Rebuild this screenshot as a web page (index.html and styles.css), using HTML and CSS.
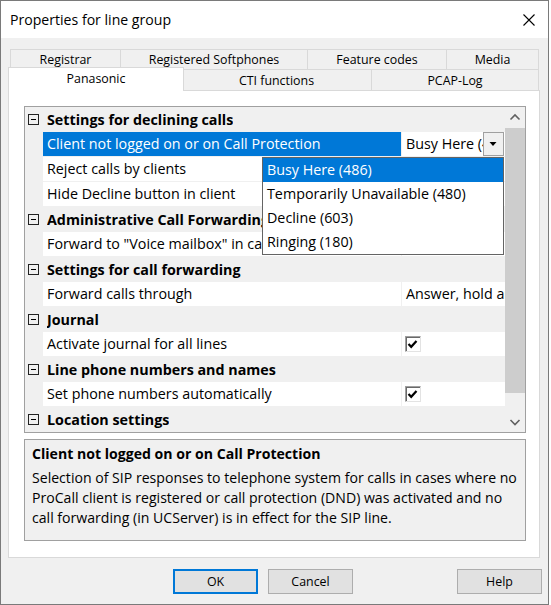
FILE: index.html
```html
<!DOCTYPE html>
<html>
<head>
<meta charset="utf-8">
<link rel="stylesheet" href="styles.css">
</head>
<body>
<div class="window">
  <div class="titlebar">
    <span class="title">Properties for line group</span>
    <svg class="close" width="12" height="12" viewBox="0 0 12 12"><path d="M0.5 0.5 L11.5 11.5 M11.5 0.5 L0.5 11.5" stroke="#000" stroke-width="1.1" fill="none"/></svg>
  </div>
  <div class="body">
    <div class="tabstrip">
      <div class="tabrow back">
        <div class="tab t-registrar">Registrar</div>
        <div class="tab t-softphones">Registered Softphones</div>
        <div class="tab t-codes">Feature codes</div>
        <div class="tab t-media">Media</div>
      </div>
      <div class="tabrow front">
        <div class="tab selected t-panasonic">Panasonic</div>
        <div class="tab t-cti">CTI functions</div>
        <div class="tab t-pcap">PCAP-Log</div>
      </div>
    </div>
    <div class="panel">
      <div class="grid">
        <div class="rows">
          <div class="row cat"><svg class="exp" width="11" height="11" viewBox="0 0 11 11"><rect x="0.5" y="0.5" width="10" height="10" fill="none" stroke="#222"/><path d="M3 5.5 H8" stroke="#000"/></svg><span class="cat-label">Settings for declining calls</span></div>
          <div class="row item sel"><span class="name">Client not logged on or on Call Protection</span><span class="value"><span class="vtext">Busy Here (486)</span><span class="ddbtn"><svg width="19" height="22" viewBox="0 0 19 22"><polygon points="5.5,9 12.5,9 9,13" fill="#000"/></svg></span></span></div>
          <div class="row item"><span class="name">Reject calls by clients</span><span class="value"></span></div>
          <div class="row item"><span class="name">Hide Decline button in client</span><span class="value"></span></div>
          <div class="row cat"><svg class="exp" width="11" height="11" viewBox="0 0 11 11"><rect x="0.5" y="0.5" width="10" height="10" fill="none" stroke="#222"/><path d="M3 5.5 H8" stroke="#000"/></svg><span class="cat-label">Administrative Call Forwarding</span></div>
          <div class="row item"><span class="name">Forward to "Voice mailbox" in case of no answer</span><span class="value"></span></div>
          <div class="row cat"><svg class="exp" width="11" height="11" viewBox="0 0 11 11"><rect x="0.5" y="0.5" width="10" height="10" fill="none" stroke="#222"/><path d="M3 5.5 H8" stroke="#000"/></svg><span class="cat-label">Settings for call forwarding</span></div>
          <div class="row item"><span class="name">Forward calls through</span><span class="value"><span class="vtext">Answer, hold and forward</span></span></div>
          <div class="row cat"><svg class="exp" width="11" height="11" viewBox="0 0 11 11"><rect x="0.5" y="0.5" width="10" height="10" fill="none" stroke="#222"/><path d="M3 5.5 H8" stroke="#000"/></svg><span class="cat-label">Journal</span></div>
          <div class="row item"><span class="name">Activate journal for all lines</span><span class="value"><span class="check"><svg width="14" height="14" viewBox="0 0 14 14"><path d="M2.5 7 L5.2 9.8 L10.5 4" stroke="#000" stroke-width="2.2" fill="none"/></svg></span></span></div>
          <div class="row cat"><svg class="exp" width="11" height="11" viewBox="0 0 11 11"><rect x="0.5" y="0.5" width="10" height="10" fill="none" stroke="#222"/><path d="M3 5.5 H8" stroke="#000"/></svg><span class="cat-label">Line phone numbers and names</span></div>
          <div class="row item"><span class="name">Set phone numbers automatically</span><span class="value"><span class="check"><svg width="14" height="14" viewBox="0 0 14 14"><path d="M2.5 7 L5.2 9.8 L10.5 4" stroke="#000" stroke-width="2.2" fill="none"/></svg></span></span></div>
          <div class="row cat"><svg class="exp" width="11" height="11" viewBox="0 0 11 11"><rect x="0.5" y="0.5" width="10" height="10" fill="none" stroke="#222"/><path d="M3 5.5 H8" stroke="#000"/></svg><span class="cat-label">Location settings</span></div>
        </div>
        <div class="scrollbar">
          <div class="sb-btn"><svg width="20" height="20" viewBox="0 0 20 20"><polyline points="5.5,12.5 10,8 14.5,12.5" stroke="#606060" stroke-width="1.6" fill="none"/></svg></div>
          <div class="thumb"></div>
          <div class="sb-track"></div>
          <div class="sb-btn"><svg width="20" height="20" viewBox="0 0 20 20"><polyline points="5.5,8 10,12.5 14.5,8" stroke="#606060" stroke-width="1.6" fill="none"/></svg></div>
        </div>
        <div class="dropdown">
          <div class="dd-item hl">Busy Here (486)</div>
          <div class="dd-item">Temporarily Unavailable (480)</div>
          <div class="dd-item">Decline (603)</div>
          <div class="dd-item">Ringing (180)</div>
        </div>
      </div>
      <div class="desc">
        <div class="desc-title">Client not logged on or on Call Protection</div>
        <div class="desc-text">Selection of SIP responses to telephone system for calls in cases where no ProCall client is registered or call protection (DND) was activated and no call forwarding (in UCServer) is in effect for the SIP line.</div>
      </div>
    </div>
    <div class="buttons">
      <div class="btn default">OK</div>
      <div class="btn">Cancel</div>
      <div class="btn help">Help</div>
    </div>
  </div>
</div>
</body>
</html>
```

FILE: styles.css
```css
* { box-sizing: border-box; }

body {
  margin: 0;
  background: #ffffff;
  font-family: "Open Sans", "Noto Sans", sans-serif;
  font-size: 14.3px;
  color: #000;
}

.window {
  width: 549px;
  height: 605px;
  border: 1px solid #7a7a7a;
  background: #f0f0f0;
  display: flex;
  flex-direction: column;
}

.titlebar {
  height: 37px;
  flex: none;
  background: #fff;
  display: flex;
  align-items: center;
  justify-content: space-between;
  padding: 0 13px 0 9px;
}

.title { font-size: 14.1px; }

.close { display: block; }

.body {
  flex: 1;
  padding: 11px 8px 0 7px;
  display: flex;
  flex-direction: column;
}

.tabstrip {
  height: 41px;
  flex: none;
  display: flex;
  flex-direction: column;
  font-size: 12.4px;
}

.tabrow {
  display: flex;
  align-items: flex-start;
  padding-left: 2px;
}

.tabrow.back { height: 20px; }
.tabrow.front { height: 21px; }

.tab {
  border: 1px solid #d9d9d9;
  border-bottom: none;
  margin-left: -1px;
  background: #f0f0f0;
  display: flex;
  align-items: center;
  justify-content: center;
  white-space: nowrap;
  flex: none;
}

.back .tab { height: 20px; }
.front .tab { height: 21px; }

.tab:first-child { margin-left: 0; }

.t-registrar { width: 111px; }
.t-softphones { width: 188px; }
.t-codes { width: 140px; }
.t-media { width: 93px; }

.front .tab.selected {
  position: relative;
  z-index: 2;
  background: #fff;
  height: 24px;
  margin: -2px -2px 0 -2px;
  width: 176px;
  padding-bottom: 2px;
}

.t-cti { width: 191px; }
.t-pcap { width: 168px; }

.panel {
  width: 532px;
  height: 468px;
  flex: none;
  border: 1px solid #d9d9d9;
  background: #fff;
  padding: 15px 13px 0 15px;
}

.grid {
  position: relative;
  width: 502px;
  height: 327px;
  border: 1px solid #a0a0a0;
  display: flex;
  background: #f0f0f0;
}

.rows {
  width: 480px;
  flex: none;
}

.row {
  height: 25px;
  display: flex;
  background: #f0f0f0;
}

.row.cat {
  align-items: center;
  padding-bottom: 1px;
}

.exp {
  display: block;
  margin-left: 3px;
  flex: none;
}

.cat-label {
  margin-left: 8px;
  font-weight: bold;
  white-space: nowrap;
  overflow: hidden;
}

.row.item {
  padding: 0 0 1px 18px;
}

.name {
  width: 358px;
  flex: none;
  background: #fff;
  margin-right: 1px;
  padding-left: 4px;
  line-height: 24px;
  white-space: nowrap;
  overflow: hidden;
}

.row.sel .name {
  background: #0078d7;
  color: #fff;
}

.value {
  width: 103px;
  flex: none;
  background: #fff;
  display: flex;
  align-items: center;
  overflow: hidden;
}

.vtext {
  flex: 1;
  min-width: 0;
  padding-left: 4px;
  line-height: 24px;
  white-space: nowrap;
  overflow: hidden;
}

.ddbtn {
  width: 21px;
  height: 24px;
  flex: none;
  margin-right: 1px;
  border: 1px solid #a0a0a0;
  background: #f0f0f0;
}

.ddbtn svg { display: block; }

.check {
  width: 16px;
  height: 16px;
  margin-left: 3px;
  border: 1px solid;
  border-color: #a0a0a0 #e3e3e3 #e3e3e3 #a0a0a0;
  box-shadow: inset 1px 1px 0 #696969;
  background: #fff;
  display: flex;
  align-items: center;
  justify-content: center;
}

.check svg { display: block; }

.scrollbar {
  width: 20px;
  flex: none;
  display: flex;
  flex-direction: column;
  background: #f0f0f0;
}

.sb-btn { height: 20px; flex: none; }
.sb-btn svg { display: block; }

.thumb {
  height: 265px;
  margin-top: 1px;
  background: #cdcdcd;
  flex: none;
}

.sb-track { flex: 1; }

.dropdown {
  position: absolute;
  left: 237px;
  top: 50px;
  width: 242px;
  border: 1px solid #646464;
  background: #fff;
  z-index: 3;
}

.dd-item {
  height: 24px;
  line-height: 24px;
  padding-left: 4px;
  white-space: nowrap;
}

.dd-item.hl {
  background: #0078d7;
  color: #fff;
}

.desc {
  margin-top: 6px;
  width: 502px;
  height: 102px;
  border: 1px solid #a0a0a0;
  background: #f0f0f0;
  padding: 4px 7px;
  font-size: 14.1px;
}

.desc-title {
  font-weight: bold;
  line-height: 20px;
}

.desc-text {
  margin-top: 4px;
  line-height: 20px;
}

.buttons {
  margin-top: 11px;
  display: flex;
  padding-left: 165px;
  gap: 10px;
  margin-right: -2px;
  font-size: 12.4px;
}

.btn {
  width: 85px;
  height: 25px;
  background: #e1e1e1;
  border: 1px solid #adadad;
  display: flex;
  align-items: center;
  justify-content: center;
}

.btn.default { border: 2px solid #0078d7; }

.btn.help { margin-left: auto; }
```
